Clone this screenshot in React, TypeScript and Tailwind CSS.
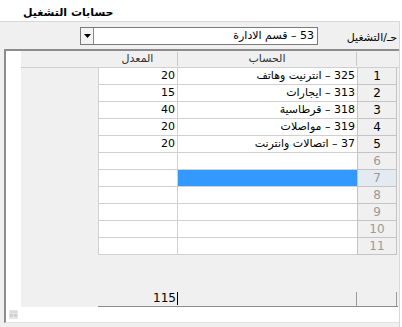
import React from "react";

const rows: { n: number; acc: string; rate: string }[] = [
  { n: 1, acc: "325 – انترنيت وهاتف", rate: "20" },
  { n: 2, acc: "313 – ايجارات", rate: "15" },
  { n: 3, acc: "318 – قرطاسية", rate: "40" },
  { n: 4, acc: "319 – مواصلات", rate: "20" },
  { n: 5, acc: "37 – اتصالات وانترنت", rate: "20" },
  { n: 6, acc: "", rate: "" },
  { n: 7, acc: "", rate: "" },
  { n: 8, acc: "", rate: "" },
  { n: 9, acc: "", rate: "" },
  { n: 10, acc: "", rate: "" },
  { n: 11, acc: "", rate: "" },
];

export default function App() {
  return (
    <div className="w-[402px] h-[327px] bg-white overflow-hidden font-['DejaVu_Sans',sans-serif] text-[11px] text-black">
      {/* title */}
      <div className="h-[21px] pl-[23px] pt-[6px] flex">
        <div className="whitespace-nowrap leading-[13px] font-bold text-[11px]" dir="rtl">
          حسابات التشغيل
        </div>
      </div>
      {/* panel */}
      <div className="w-[400px] h-[306px] bg-[#f0f0f0] border-t border-r border-[#d8d8d8] flex flex-col">
        {/* dropdown row */}
        <div className="flex h-[18px] mt-[5px]">
          <div className="ml-[80px] w-[238px] h-[18px] bg-white border border-[#7a7a7a] flex items-stretch">
            <div className="w-[13px] h-full bg-[#f4f4f4] border-r border-[#8a8a8a] flex items-center justify-center">
              <svg width="7" height="4" viewBox="0 0 7 4">
                <path d="M0 0 L7 0 L3.5 4 Z" fill="#000" />
              </svg>
            </div>
            <div className="flex-1 text-right pr-[3px] leading-[16px] text-[11px]" dir="rtl">
              53 – قسم الادارة
            </div>
          </div>
          <div className="flex-1 text-right pr-[2px] pt-[4px] leading-[14px] text-[11px]" dir="rtl">
            حـ/التشغيل
          </div>
        </div>
        {/* grid */}
        <div className="mt-[4px] ml-[4px] w-[395px] h-[274px] border-t-2 border-l-2 border-[#8c8c8c] border-b border-r-0 border-b-[#e3e3e3] flex flex-col">
          <div className="flex h-[256px]">
            {/* left white strip */}
            <div className="w-[15px] bg-white" />
            {/* grid area */}
            <div className="flex-1 bg-[#f0f0f0] flex flex-col">
              {/* header */}
              <div className="flex h-[17px] border-b border-[#d0d0d0]">
                <div className="w-[77px]" />
                <div className="w-[80px] border-r border-[#c8c8c8] my-[1px] text-center leading-[14px] text-[#333]" dir="rtl">
                  المعدل
                </div>
                <div className="w-[179px] border-r border-[#c8c8c8] my-[1px] text-center leading-[14px] text-[#333]" dir="rtl">
                  الحساب
                </div>
                <div className="w-[40px]" />
              </div>
              {/* rows */}
              {rows.map((r) => (
                <div key={r.n} className="flex h-[17px]">
                  <div className="w-[77px]" />
                  <div className="w-[80px] bg-white border-l border-b border-r border-[#d0d0d0] text-right pr-[2px] leading-[16px]">
                    {r.rate}
                  </div>
                  <div
                    className={
                      r.n === 7
                        ? "w-[179px] bg-[#3399ff] border-b border-[#d0d0d0] text-right pr-[2px] leading-[16px]"
                        : "w-[179px] bg-white border-b border-[#d0d0d0] text-right pr-[2px] leading-[16px]"
                    }
                    dir="rtl"
                  >
                    {r.acc}
                  </div>
                  <div
                    className={
                      (r.n === 7 ? "bg-[#e3eaf2] " : "bg-[#f0f0f0] ") +
                      (r.n <= 5 ? "text-black " : "text-[#9a9a9a] ") +
                      "w-[40px] border-l border-b border-r border-[#c4c4c4] text-center leading-[16px] text-[12px]"
                    }
                  >
                    {r.n}
                  </div>
                </div>
              ))}
              <div className="flex-1" />
              {/* footer */}
              <div className="flex h-[16px] border-b border-[#8c8c8c] ml-[77px] w-[300px]">
                <div className="w-[80px] flex justify-end items-end pb-[1px]">
                  <span className="leading-[13px] text-[12px] pr-[1px]">115</span>
                  <span className="w-[1px] h-[13px] bg-black" />
                </div>
                <div className="w-[179px] border-r border-[#9a9a9a] mt-[1px]" />
                <div className="w-[40px] border-r border-[#9a9a9a] mt-[1px]" />
              </div>
            </div>
          </div>
          {/* bottom strip */}
          <div className="flex-1 bg-white flex">
            <div className="w-[15px] h-[15px] flex items-end justify-start p-[2px]">
              <svg width="11" height="11" viewBox="0 0 11 11">
                <rect x="1" y="1" width="9" height="9" fill="#e6e6e6" />
                <rect x="2" y="5" width="3" height="3" fill="#d0d0d0" />
                <rect x="6" y="5" width="3" height="3" fill="#d0d0d0" />
                <rect x="2" y="2" width="7" height="2" fill="#dadada" />
              </svg>
            </div>
          </div>
        </div>
      </div>
    </div>
  );
}
